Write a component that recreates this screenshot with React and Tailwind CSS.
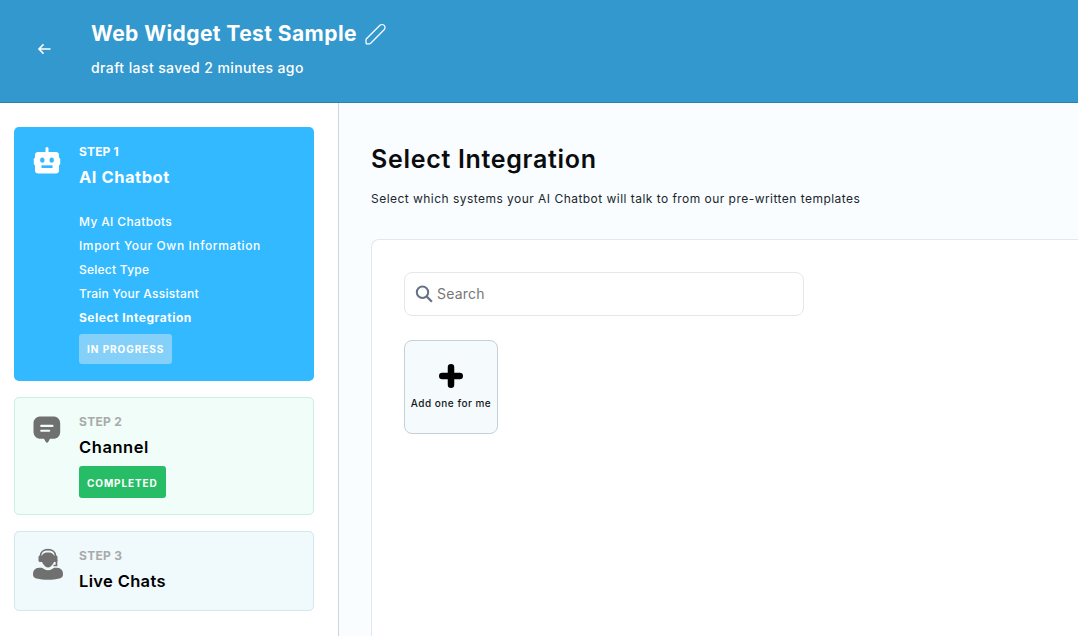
import React from "react";

function Robot() {
  return (
    <svg className="block h-[30px] w-[30px]" viewBox="0 0 30 30" fill="#fff">
      <rect x="13.5" y="2" width="3" height="7" rx="1.5" />
      <rect x="1.8" y="12.5" width="4" height="8" rx="1.8" />
      <rect x="24.2" y="12.5" width="4" height="8" rx="1.8" />
      <rect x="3" y="7" width="24" height="21.5" rx="3.2" />
      <ellipse cx="10.3" cy="15.1" rx="2.2" ry="2.7" fill="#32b9ff" />
      <ellipse cx="19.7" cy="15.1" rx="2.2" ry="2.7" fill="#32b9ff" />
      <rect x="9.5" y="20.3" width="11" height="2.7" fill="#32b9ff" />
    </svg>
  );
}

function Bubble() {
  return (
    <svg className="block h-[30px] w-[30px]" viewBox="0 0 30 30">
      <path
        d="M9 1.5h12c4.600 0 7.200 2.700 7.200 7v8c0 4.500-2.600 7.300-7.200 7.300h-3l-1.800 3.300c-.7 1-1.700 1-2.400 0L12 23.800H9c-4.800 0-7.500-2.800-7.500-7.300v-8c0-4.300 2.700-7 7.500-7z"
        fill="#707070"
      />
      <path d="M9.200 10.900h11.300M9.200 15.700h8" stroke="#f0fdf8" strokeWidth="2.1" strokeLinecap="round" />
    </svg>
  );
}

function Agent() {
  return (
    <svg className="block h-[34px] w-[32px]" viewBox="0 0 32 34" fill="#707070">
      <path d="M8.500 11V8.800C8.500 5 11.500 2.700 16 2.700s7.500 2.300 7.500 6.100V11" fill="none" stroke="#707070" strokeWidth="1.7" />
      <path d="M16 5.600c4 0 6.700 1.900 6.700 5.900 0 4.300-3.700 9-6.700 9s-6.700-4.700-6.700-9c0-4 2.700-5.900 6.700-5.900z" />
      <rect x="6.5" y="8.5" width="4" height="6.5" rx="1.5" />
      <rect x="21.5" y="8.5" width="4" height="6.5" rx="1.5" />
      <path d="M24.500 13v5.500h-3" fill="none" stroke="#707070" strokeWidth="1.7" />
      <path d="M7 20.800c2.500-.2 3.700.2 5 1.200 1.200.8 2.500 1.200 4 1.200s2.900-.4 4.100-1.200c1.300-1 2.500-1.400 4.900-1.200 4 .3 6 2.600 6 6.500 0 2.500-1.200 3.600-3.500 4.200-3.500.9-7.500 1.200-11.500 1.200s-8-.3-11.500-1.200C2.200 30.900 1 29.800 1 27.300c0-3.900 2-6.200 6-6.500z" />
    </svg>
  );
}

const chatbotSteps = [
  ["My AI Chatbots", "tracking-[0.36px]"],
  ["Import Your Own Information", "tracking-[0.6px]"],
  ["Select Type", "tracking-[0.25px]"],
  ["Train Your Assistant", "tracking-[0.25px]"],
];

export default function App() {
  return (
    <div className="flex h-[636px] w-[1078px] flex-col overflow-hidden bg-white font-[Inter,sans-serif] text-black">
      <header className="flex h-[103px] shrink-0 border-b border-[#2b80b0] bg-[#3398cd] pt-[22px] text-white">
        <div className="w-[91px] shrink-0 pt-[20px] pl-[37px]">
          <svg className="block h-[14px] w-[14px]" viewBox="0 0 14 14" fill="none" stroke="#fff" strokeWidth="1.6">
            <path d="M13.500 7H2.200M6.500 2.400 2 7l4.500 4.600" />
          </svg>
        </div>
        <div>
          <div className="flex h-6 items-center">
            <h1 className="w-[274px] text-[21px] leading-6 font-bold tracking-[0.43px] whitespace-nowrap">Web Widget Test Sample</h1>
            <svg className="block h-[22px] w-[22px]" viewBox="0 0 22 22" fill="none" stroke="#fff" strokeWidth="1.25" strokeLinejoin="round">
              <path d="M1.200 16 14.700 2.500C15.900 1.300 18.100 1.300 19.200 2.400s1.100 3.200-.1 4.400L5.700 20.200c-1.300.8-2.800.9-4.400.6-.4-1.800-.6-3.500-.1-4.800z" />
            </svg>
          </div>
          <p className="mt-3 text-[14px] leading-5 font-medium tracking-[0.4px] whitespace-nowrap">draft last saved 2 minutes ago</p>
        </div>
      </header>

      <div className="flex min-h-0 flex-1">
        <aside className="flex w-[339px] shrink-0 flex-col gap-4 border-r border-[#cdd5dc] pt-6 pl-[14px]">
          <section className="flex h-[254px] w-[300px] shrink-0 rounded-[5px] bg-[#32b9ff] text-white">
            <div className="w-[65px] shrink-0 pt-[18px] pl-[18px]">
              <Robot />
            </div>
            <div className="flex flex-col items-start pt-4 whitespace-nowrap">
              <div className="text-[12px] leading-[18px] font-bold tracking-[0.15px]">STEP 1</div>
              <h2 className="mt-1 text-[16.5px] leading-6 font-bold tracking-[0.52px]">AI Chatbot</h2>
              <ul className="mt-[21px] text-[12px] leading-6 font-medium">
                {chatbotSteps.map(([label, spacing]) => (
                  <li key={label} className={spacing}>{label}</li>
                ))}
                <li className="font-bold tracking-[0.5px]">Select Integration</li>
              </ul>
              <span className="mt-1 flex h-[30px] w-[93px] items-center rounded-[3px] bg-[#84d0f8] pl-2 text-[10px] font-bold tracking-[0.95px]">IN PROGRESS</span>
            </div>
          </section>

          <section className="flex h-[118px] w-[300px] shrink-0 rounded-[5px] border border-[#cdeee2] bg-[#f0fdf8]">
            <div className="w-[64px] shrink-0 pt-[17px] pl-[17px]">
              <Bubble />
            </div>
            <div className="flex flex-col items-start pt-[15px] whitespace-nowrap">
              <div className="text-[12px] leading-[18px] font-bold tracking-[0.3px] text-[#a9aaaa]">STEP 2</div>
              <h2 className="mt-1 text-[16.5px] leading-6 font-semibold tracking-[0.57px]">Channel</h2>
              <span className="mt-[7px] flex h-8 w-[87px] items-center rounded-[3px] bg-[#27bd66] pt-0.5 pl-2 text-[10px] font-bold tracking-[0.9px] text-white">COMPLETED</span>
            </div>
          </section>

          <section className="flex h-20 w-[300px] shrink-0 rounded-[5px] border border-[#cfe9ef] bg-[#f0f9fc]">
            <div className="w-[64px] shrink-0 pt-[15px] pl-[17px]">
              <Agent />
            </div>
            <div className="pt-[15px] whitespace-nowrap">
              <div className="text-[12px] leading-[18px] font-bold tracking-[0.3px] text-[#a9aaaa]">STEP 3</div>
              <h2 className="mt-1 text-[16.5px] leading-6 font-semibold tracking-[0.34px]">Live Chats</h2>
            </div>
          </section>
        </aside>

        <main className="flex min-w-0 flex-1 flex-col bg-[#f9fdff] pt-10 pl-8 whitespace-nowrap">
          <h2 className="text-[25px] leading-8 font-semibold tracking-[0.69px] text-[#0b0c0d]">Select Integration</h2>
          <p className="mt-[14px] text-[12px] leading-5 tracking-[0.465px] text-[#20262c]">Select which systems your AI Chatbot will talk to from our pre-written templates</p>
          <div className="mt-[30px] flex-1 rounded-tl-[8px] border-t border-l border-[#e5e7eb] bg-white pt-8 pl-8">
            <div className="flex h-11 w-[400px] items-center rounded-[8px] border border-[#e5e7eb] pl-[10px]">
              <svg className="block h-[18px] w-[18px]" viewBox="0 0 18 18" fill="none" stroke="#667085" strokeWidth="2">
                <circle cx="7.5" cy="7.3" r="5.7" />
                <path d="m11.700 11.500 5.200 5.200" strokeWidth="2.3" />
              </svg>
              <span className="ml-1 text-[14px] leading-5 tracking-[0.2px] text-[#777]">Search</span>
            </div>
            <button className="mt-6 flex h-[94px] w-[94px] flex-col items-center rounded-[8px] border border-[#c7d0d6] bg-[#f5fafd] pt-[23px]">
              <svg className="block h-6 w-6" viewBox="0 0 24 24" stroke="#000" strokeWidth="6.5" strokeLinecap="round">
                <path d="M12 3.250v17.500M3.250 12h17.500" />
              </svg>
              <span className="mt-[7px] text-[10px] leading-4 font-medium tracking-[0.5px] text-[#111820]">Add one for me</span>
            </button>
          </div>
        </main>
      </div>
    </div>
  );
}
